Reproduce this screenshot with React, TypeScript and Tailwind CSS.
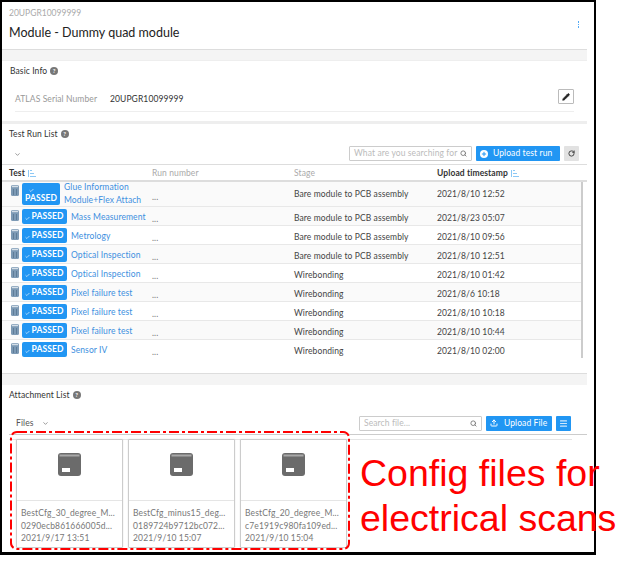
import { Pencil, Search, RotateCw, Upload, ChevronDown, Check, Plus, Menu } from "lucide-react";

const rows = [
  ["Mass Measurement", "Bare module to PCB assembly", "2021/8/23 05:07"],
  ["Metrology", "Bare module to PCB assembly", "2021/8/10 09:56"],
  ["Optical Inspection", "Bare module to PCB assembly", "2021/8/10 12:51"],
  ["Optical Inspection", "Wirebonding", "2021/8/10 01:42"],
  ["Pixel failure test", "Wirebonding", "2021/8/6 10:18"],
  ["Pixel failure test", "Wirebonding", "2021/8/10 10:18"],
  ["Pixel failure test", "Wirebonding", "2021/8/10 10:44"],
  ["Sensor IV", "Wirebonding", "2021/8/10 02:00"],
];

const files = [
  ["BestCfg_30_degree_M...", "0290ecb861666005d...", "2021/9/17 13:51"],
  ["BestCfg_minus15_deg...", "0189724b9712bc072...", "2021/9/10 15:07"],
  ["BestCfg_20_degree_M...", "c7e1919c980fa109ed...", "2021/9/10 15:04"],
];

function Help() {
  return (
    <span className="ml-[3px] inline-flex h-[8px] w-[8px] items-center justify-center rounded-full bg-[#777] text-[6px] font-bold leading-none text-white">?</span>
  );
}

function SortIcon() {
  return (
    <svg width="8" height="7" viewBox="0 0 8 7" className="ml-[3px]" fill="#8cc8f5">
      <rect x="0" y="0" width="1" height="7" />
      <rect x="2" y="0" width="2" height="1" />
      <rect x="2" y="3" width="4" height="1" />
      <rect x="2" y="6" width="6" height="1" />
    </svg>
  );
}

function DocIcon() {
  return (
    <svg width="8" height="11" viewBox="0 0 8 11" className="mt-[3px] shrink-0">
      <rect width="8" height="11" rx="1.5" fill="#7d9ab5" />
      <rect x="1" y="0.7" width="6" height="1.5" fill="#d5dfe8" />
      <rect x="2" y="4" width="1" height="6" fill="#5e7c98" />
      <rect x="5" y="4" width="1" height="6" fill="#5e7c98" />
    </svg>
  );
}

function Passed() {
  return (
    <span className="flex h-[15px] w-[45px] shrink-0 items-center justify-center rounded-[2px] bg-[#2196f3] text-[8.5px] font-bold tracking-[0.1px] text-white">
      <Check size={5} strokeWidth={3} className="mt-[4px] mr-[1px]" />
      PASSED
    </span>
  );
}

function Box() {
  return (
    <svg width="23" height="23" viewBox="0 0 23 23">
      <rect width="23" height="23" rx="3" fill="#6b6b6b" />
      <rect x="1.5" y="1.5" width="20" height="2" fill="#a8a8a8" />
      <rect x="4" y="15" width="8" height="4" fill="#fff" />
    </svg>
  );
}

export default function App() {
  return (
    <div className="relative h-[562px] w-[639px] overflow-hidden bg-white font-['Lato',sans-serif] text-[#444]">
      <div className="flex h-[555px] w-[596px] flex-col border-[2px] border-b-[3px] border-black bg-white pr-[7px]">
        <div className="flex h-[48px] shrink-0 justify-between border-b border-[#ddd]">
          <div className="pl-[7px]">
            <div className="pt-[4px] text-[8.5px] leading-[14px] text-[#aaa]">20UPGR10099999</div>
            <div className="mt-[5px] text-[12.5px] leading-[16px] text-[#222]">Module - Dummy quad module</div>
          </div>
          <div className="mt-[19px] mr-[8px] flex flex-col gap-[1px]">
            <i className="h-[1.5px] w-[1.5px] bg-[#55aaf5]" />
            <i className="h-[1.5px] w-[1.5px] bg-[#55aaf5]" />
            <i className="h-[1.5px] w-[1.5px] bg-[#55aaf5]" />
          </div>
        </div>
        <div className="h-[11px] shrink-0 border-b border-[#eee] bg-[#f4f4f4]" />

        <div className="h-[60px] shrink-0">
          <div className="flex items-center pt-[4px] pl-[8px] text-[8.5px] leading-[12px] tracking-[0.1px] text-[#333]">
            Basic Info <Help />
          </div>
          <div className="mx-[13px] mt-[4px] flex h-[31px] items-start justify-between border-b border-[#eee] pt-[8px] text-[8.5px] tracking-[0.1px]">
            <div className="flex pt-[4px] leading-[12px]">
              <span className="w-[95px] text-[#999]">ATLAS Serial Number</span>
              <span className="text-[#333]">20UPGR10099999</span>
            </div>
            <span className="flex h-[15px] w-[16px] items-center justify-center rounded-[1px] border border-[#bbb]">
              <Pencil size={8} fill="#222" color="#222" />
            </span>
          </div>
        </div>
        <div className="h-[3px] shrink-0 bg-[#eee]" />

        <div className="flex h-[40px] shrink-0 flex-col">
          <div className="flex items-center pt-[3px] pl-[7px] text-[8.5px] leading-[14px] tracking-[0.1px] text-[#333]">
            Test Run List <Help />
          </div>
          <div className="mt-[5px] flex items-center justify-between pr-[8px] pl-[12px]">
            <ChevronDown size={7} color="#555" className="mt-[2px]" />
            <div className="flex items-center gap-[4px]">
              <div className="flex h-[15px] w-[123px] items-center justify-between overflow-hidden rounded-[1px] border border-[#ccc] px-[4px] text-[8.5px] tracking-[0.1px] whitespace-nowrap text-[#bbb]">
                What are you searching for <Search size={7} color="#777" strokeWidth={3} className="shrink-0" />
              </div>
              <div className="flex h-[15px] w-[84px] items-center rounded-[1px] bg-[#2196f3] pl-[4px] text-[8.5px] tracking-[0.1px] text-white">
                <span className="mr-[5px] flex h-[8px] w-[8px] items-center justify-center rounded-full bg-white">
                  <Plus size={6} color="#2196f3" strokeWidth={4} />
                </span>
                Upload test run
              </div>
              <div className="flex h-[15px] w-[15px] items-center justify-center rounded-[1px] bg-[#e2e2e2]">
                <RotateCw size={7} color="#333" strokeWidth={3} />
              </div>
            </div>
          </div>
        </div>

        <div className="grid h-[18px] shrink-0 grid-cols-[143px_142px_143px_1fr] items-center border-y border-b-[2px] border-[#ddd] pt-[2px] pl-[7px] text-[8.5px] tracking-[0.1px]">
          <span className="flex items-center font-bold text-[#333]">Test<SortIcon /></span>
          <span className="text-[#aaa]">Run number</span>
          <span className="text-[#aaa]">Stage</span>
          <span className="flex items-center font-bold text-[#333]">Upload timestamp<SortIcon /></span>
        </div>

        <div className="h-[176px] w-[581px] shrink-0 overflow-hidden border-r-[2px] border-[#ccc] text-[8.5px] tracking-[0.1px]">
          <div className="grid h-[25px] grid-cols-[143px_142px_143px_1fr] overflow-hidden border-b border-[#e8e8e8] bg-[#fafafa] pl-[9px] text-[#444]">
            <div className="flex">
              <DocIcon />
              <div className="mt-[1px] ml-[3px] flex h-[22px] w-[38px] shrink-0 flex-col items-center justify-end rounded-[2px] bg-[#2196f3] pb-[2px] text-[8.5px] leading-[10px] font-bold text-white">
                <Check size={5} strokeWidth={3} className="-ml-[20px]" />
                PASSED
              </div>
              <div className="-mt-[1px] ml-[4px] leading-[12.5px] whitespace-nowrap text-[#3d8fe0]">
                Glue Information<br />Module+Flex Attach
              </div>
            </div>
            <span className="mt-[9px] -ml-[2px] leading-[12px] text-[#777]">...</span>
            <span className="mt-[1px] -ml-[2px] pt-[5px] leading-[12px]">Bare module to PCB assembly</span>
            <span className="mt-[1px] -ml-[2px] pt-[5px] leading-[12px]">2021/8/10 12:52</span>
          </div>
          {rows.map((r, i) => (
            <div
              key={i}
              className={`grid h-[19px] grid-cols-[143px_142px_143px_1fr] border-b border-[#e8e8e8] pl-[9px] text-[#444] ${i % 2 === 1 ? "bg-white" : "bg-[#fafafa]"}`}
            >
              <div className="flex items-start">
                <DocIcon />
                <span className="mt-[2px] mr-[4px] ml-[3px]"><Passed /></span>
                <span className="mt-[3px] leading-[14px] whitespace-nowrap text-[#3d8fe0]">{r[0]}</span>
              </div>
              <span className="-ml-[2px] pt-[6px] leading-[12px] text-[#777]">...</span>
              <span className="-ml-[2px] pt-[5px] leading-[12px]">{r[1]}</span>
              <span className="-ml-[2px] pt-[5px] leading-[12px]">{r[2]}</span>
            </div>
          ))}
        </div>

        <div className="h-[15px] shrink-0" />
        <div className="h-[12px] shrink-0 border-t border-[#ddd] bg-[#f4f4f4]" />

        <div className="flex min-h-0 flex-1 flex-col pl-[7px]">
          <div className="flex items-center pt-[3px] text-[8.5px] leading-[14px] tracking-[0.1px] text-[#333]">
            Attachment List <Help />
          </div>
          <div className="mt-[12px] flex h-[21px] items-center justify-between border-b border-[#ccc] pr-[8px] pb-[2px]">
            <span className="flex items-center pl-[7px] text-[8.5px] tracking-[0.1px] text-[#555]">
              Files <ChevronDown size={7} color="#555" className="ml-[8px]" />
            </span>
            <div className="mr-[8px] flex items-center gap-[4px]">
              <div className="flex h-[15px] w-[123px] items-center justify-between rounded-[1px] border border-[#ccc] px-[4px] text-[8.5px] tracking-[0.1px] text-[#bbb]">
                Search file... <Search size={7} color="#777" strokeWidth={3} />
              </div>
              <div className="flex h-[15px] w-[66px] items-center rounded-[1px] bg-[#2196f3] pl-[4px] text-[8.5px] tracking-[0.1px] text-white">
                <Upload size={8} strokeWidth={3} className="mr-[6px]" />
                Upload File
              </div>
              <div className="flex h-[15px] w-[15px] items-center justify-center rounded-[1px] bg-[#2196f3]">
                <Menu size={9} color="#cfe8fc" strokeWidth={3} />
              </div>
            </div>
          </div>
          <div className="mt-[4px] mr-[15px] flex gap-[5px] border-t border-[#e5e5e5] pl-[7px]">
            {files.map((f, i) => (
              <div key={i} className="-mt-[1px] h-[109px] w-[107px] shrink-0 rounded-[1px] border border-[#ccc] shadow-[0_0_1px_#bbb]">
                <div className="flex h-[61px] justify-center border-b border-[#e5e5e5] pt-[13px]">
                  <Box />
                </div>
                <div className="pt-[6px] pl-[4px] text-[8.5px] leading-[12.5px] tracking-[0.15px] text-[#777]">
                  <div className="whitespace-nowrap">{f[0]}</div>
                  <div className="whitespace-nowrap">{f[1]}</div>
                  <div className="whitespace-nowrap">{f[2]}</div>
                </div>
              </div>
            ))}
          </div>
        </div>
      </div>

      <svg width="340" height="119" viewBox="0 0 340 119" className="absolute top-[431px] left-[10px]" fill="none">
        <rect x="1" y="1" width="338" height="117" rx="6" stroke="#f00" strokeWidth="2" strokeDasharray="10 3 3 3" />
      </svg>
      <div className="absolute top-[451px] left-[360px] font-['Liberation_Sans',sans-serif] text-[37.5px] leading-[45px] whitespace-nowrap text-[#f00]">
        Config files for<br />electrical scans
      </div>
    </div>
  );
}
